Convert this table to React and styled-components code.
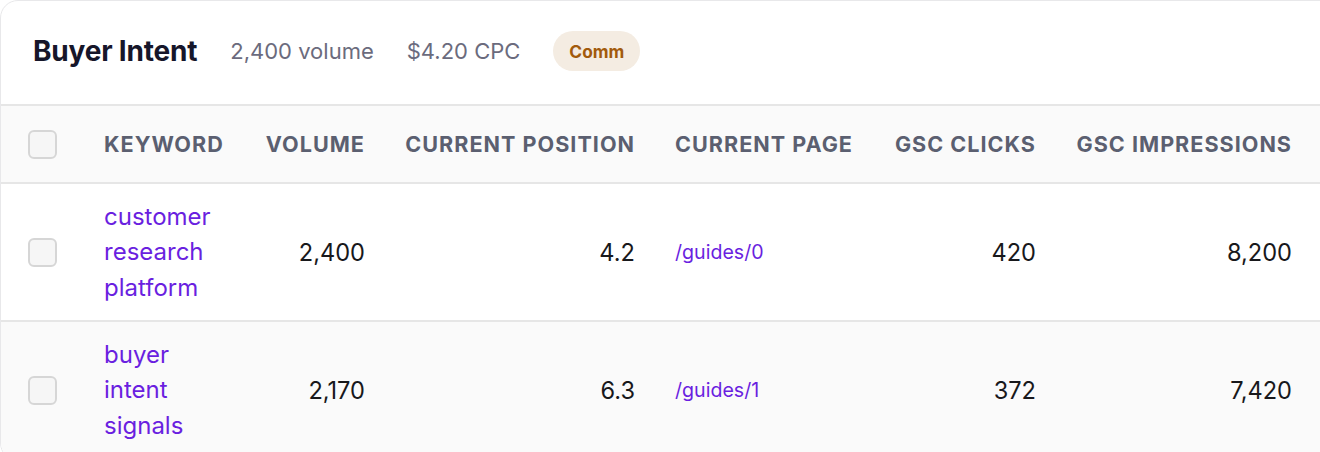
import React from "react";
import styled, { createGlobalStyle } from "styled-components";

const Global = createGlobalStyle`
  html, body { margin: 0; padding: 0; background: #ffffff; overflow: hidden; }
  body { font-family: Inter, "Noto Sans", sans-serif; }
`;

const Card = styled.section`
  width: calc(100% + 40px);
  box-sizing: border-box;
  background: #ffffff;
  border: 1px solid #e8e8ea;
  border-radius: 18px;
  overflow: hidden;
`;

const CardHeader = styled.header`
  display: flex;
  align-items: center;
  gap: 33px;
  height: 105px;
  box-sizing: border-box;
  padding: 0 32px 3px;
  border-bottom: 2px solid #e6e6e6;
`;

const Title = styled.h2`
  margin: 0;
  font-size: 28px;
  font-weight: 700;
  color: #16162a;
  letter-spacing: -0.2px;
`;

const Meta = styled.span`
  font-size: 22px;
  color: #6b6b7d;
`;

const Badge = styled.span`
  display: inline-flex;
  align-items: center;
  height: 40px;
  padding: 0 16px;
  border-radius: 20px;
  background: #f4ece2;
  color: #a25a0c;
  font-size: 17.3px;
  font-weight: 700;
`;

const COLS = "83px 161px 140px 270px 219px 182px 264px 40px";

const Row = styled.div`
  display: grid;
  grid-template-columns: ${COLS};
  align-items: center;
  height: ${(p) => p.$h}px;
  background: ${(p) => (p.$shaded ? "#fafafa" : "#ffffff")};
  border-bottom: 2px solid #e6e6e6;
`;

const Cell = styled.div`
  padding: 0 20px;
  text-align: ${(p) => (p.$right ? "right" : "left")};
  &:first-child { padding-left: 27px; padding-right: 0; }
  &:nth-child(7) { padding-right: 28px; }
`;

const HeadLabel = styled.span`
  font-size: 21.6px;
  font-weight: 700;
  text-transform: uppercase;
  letter-spacing: 1px;
  color: #5b5f70;
  white-space: nowrap;
`;

const Checkbox = styled.span`
  display: block;
  width: 29px;
  height: 29px;
  box-sizing: border-box;
  border: 2px solid #d6d6d6;
  border-radius: 6px;
  background: #f6f6f6;
`;

const KeywordLink = styled.a`
  display: block;
  font-size: 24px;
  line-height: 35.5px;
  color: #6a1fe0;
  text-decoration: none;
`;

const Num = styled.span`
  font-size: 23.6px;
  color: #18181b;
`;

const PageLink = styled.a`
  font-size: 19.6px;
  color: #6a1fe0;
  text-decoration: none;
`;

const headers = [
  { label: "Keyword" },
  { label: "Volume", right: true },
  { label: "Current Position", right: true },
  { label: "Current Page" },
  { label: "GSC Clicks", right: true },
  { label: "GSC Impressions", right: true },
];

const rows = [
  { kw: ["customer", "research", "platform"], vol: "2,400", pos: "4.2", page: "/guides/0", clicks: "420", imp: "8,200" },
  { kw: ["buyer", "intent", "signals"], vol: "2,170", pos: "6.3", page: "/guides/1", clicks: "372", imp: "7,420", shaded: true },
];

export default function App() {
  return (
    <>
      <Global />
      <Card>
        <CardHeader>
          <Title>Buyer Intent</Title>
          <Meta>2,400 volume</Meta>
          <Meta>$4.20 CPC</Meta>
          <Badge>Comm</Badge>
        </CardHeader>
        <Row $h={76} $shaded>
          <Cell><Checkbox /></Cell>
          {headers.map((h) => (
            <Cell key={h.label} $right={h.right}>
              <HeadLabel>{h.label}</HeadLabel>
            </Cell>
          ))}
          <Cell />
        </Row>
        {rows.map((r) => (
          <Row key={r.page} $h={136} $shaded={r.shaded}>
            <Cell><Checkbox /></Cell>
            <Cell>
              {r.kw.map((w) => (
                <KeywordLink key={w} href="#">{w}</KeywordLink>
              ))}
            </Cell>
            <Cell $right><Num>{r.vol}</Num></Cell>
            <Cell $right><Num>{r.pos}</Num></Cell>
            <Cell><PageLink href="#">{r.page}</PageLink></Cell>
            <Cell $right><Num>{r.clicks}</Num></Cell>
            <Cell $right><Num>{r.imp}</Num></Cell>
            <Cell />
          </Row>
        ))}
      </Card>
    </>
  );
}
